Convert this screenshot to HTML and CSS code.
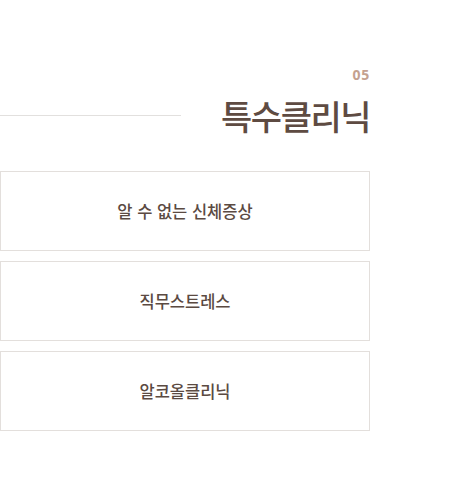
FILE: index.html
```html
<!DOCTYPE html>
<html lang="ko">

<head>
    <meta charset="UTF-8">
    <meta name="viewport" content="width=device-width, initial-scale=1.0">
    <title>특수클리닉</title>
    <link rel="stylesheet" href="styles.css">
</head>

<body>
    <!-- 특수클리닉 섹션 -->
    <section class="clinic">
        <div class="clinic-head">
            <span class="head-line"></span>
            <div class="head-text">
                <span class="num">05</span>
                <h2>특수클리닉</h2>
            </div>
        </div>

        <ul class="clinic-list">
            <li><a href="#">알 수 없는 신체증상</a></li>
            <li><a href="#">직무스트레스</a></li>
            <li><a href="#">알코올클리닉</a></li>
        </ul>
    </section>
</body>

</html>
```

FILE: styles.css
```css
/* 기본 스타일 */
body {
    margin: 0;
    font-family: "Noto Sans CJK KR", "Noto Sans", sans-serif;
    background-color: #fff;
    color: #5b4a42;
}

/* 섹션 */
.clinic {
    width: 370px;
    padding-top: 65px;
}

.clinic-head {
    display: flex;
    align-items: flex-end;
    gap: 40px;
}

.head-line {
    flex: 1;
    height: 1px;
    background-color: #e2e0de;
    margin-bottom: 24px;
}

.head-text {
    display: flex;
    flex-direction: column;
    align-items: flex-end;
}

.num {
    font-family: "Open Sans", "Liberation Sans", sans-serif;
    font-size: 14px;
    font-weight: 700;
    letter-spacing: 0.8px;
    color: #c4a190;
    line-height: 20px;
}

.head-text h2 {
    margin: 7px 0 0;
    font-size: 34px;
    font-weight: 500;
    letter-spacing: -1.5px;
    line-height: 48px;
    color: #5e4b42;
}

/* 목록 */
.clinic-list {
    list-style: none;
    margin: 31px 0 0;
    padding: 0;
    display: flex;
    flex-direction: column;
    gap: 10px;
}

.clinic-list a {
    display: flex;
    align-items: center;
    justify-content: center;
    height: 78px;
    border: 1px solid #e3dfdc;
    color: #5b4a42;
    text-decoration: none;
    font-size: 16.5px;
    font-weight: 500;
}
```
